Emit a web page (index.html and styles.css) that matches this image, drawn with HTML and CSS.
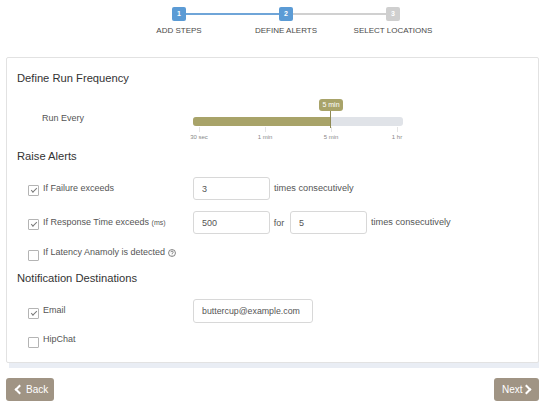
FILE: index.html
```html
<!DOCTYPE html>
<html lang="en">
<head>
    <meta charset="UTF-8">
    <meta name="viewport" content="width=device-width, initial-scale=1.0">
    <title>Define Alerts</title>
    <link rel="stylesheet" href="styles.css">
</head>
<body>
<!-- Wizard steps -->
<div class="steps">
    <div class="step done">
        <span class="step-num">1</span>
        <span class="step-label">ADD STEPS</span>
    </div>
    <div class="step active">
        <span class="step-num">2</span>
        <span class="step-label">DEFINE ALERTS</span>
    </div>
    <div class="step">
        <span class="step-num">3</span>
        <span class="step-label">SELECT LOCATIONS</span>
    </div>
</div>

<div class="card">
    <h2 class="first">Define Run Frequency</h2>
    <div class="freq">
        <span class="freq-label">Run Every</span>
        <div class="slider">
            <div class="track">
                <div class="fill"></div>
                <div class="handle"></div>
                <div class="bubble">5 min</div>
            </div>
            <div class="ticks">
                <span class="tick">30 sec</span>
                <span class="tick">1 min</span>
                <span class="tick">5 min</span>
                <span class="tick">1 hr</span>
            </div>
        </div>
    </div>

    <h2 class="raise">Raise Alerts</h2>
    <div class="row row-failure">
        <label class="check"><input type="checkbox" checked><span>If Failure exceeds</span></label>
        <input class="field" type="text" value="3">
        <span class="after">times consecutively</span>
    </div>
    <div class="row row-response">
        <label class="check"><input type="checkbox" checked><span>If Response Time exceeds <small>(ms)</small></span></label>
        <input class="field" type="text" value="500">
        <span class="for">for</span>
        <input class="field" type="text" value="5">
        <span class="after">times consecutively</span>
    </div>
    <div class="row row-latency">
        <label class="check"><input type="checkbox"><span>If Latency Anamoly is detected</span>
            <svg class="help" width="8" height="8" viewBox="0 0 9 9">
                <circle cx="4.5" cy="4.5" r="3.9" fill="none" stroke="#555" stroke-width="0.8"/>
                <path d="M3.2 3.6c0-1.7 2.7-1.7 2.7 0 0 1-1.4 1-1.4 2" fill="none" stroke="#555" stroke-width="0.8"/>
                <circle cx="4.5" cy="6.8" r="0.5" fill="#555"/>
            </svg>
        </label>
    </div>

    <h2 class="notify">Notification Destinations</h2>
    <div class="row row-email">
        <label class="check"><input type="checkbox" checked><span>Email</span></label>
        <input class="field field-email" type="text" value="buttercup@example.com">
    </div>
    <div class="row row-hipchat">
        <label class="check"><input type="checkbox"><span>HipChat</span></label>
    </div>
</div>

<div class="nav">
    <button type="button" class="btn back"><span class="chev chev-left"></span>Back</button>
    <button type="button" class="btn next">Next<span class="chev chev-right"></span></button>
</div>
</body>
</html>
```

FILE: styles.css
```css
/* page */
html, body {
    height: 100%;
}

body {
    font-family: "Liberation Sans", Arial, sans-serif;
    font-size: 9px;
    color: #555;
    background-color: #fff;
    margin: 0;
    padding: 7px 6px 0;
    box-sizing: border-box;
    overflow: hidden;
}

/* steps */
.steps {
    display: flex;
    justify-content: center;
    margin-left: 27px;
    height: 50px;
}

.step {
    position: relative;
    width: 107px;
    display: flex;
    flex-direction: column;
    align-items: center;
}

.step-num {
    position: relative;
    z-index: 1;
    width: 14px;
    height: 14px;
    line-height: 14px;
    text-align: center;
    font-size: 7px;
    font-weight: bold;
    color: #fff;
    background-color: #cfcfcf;
    border-radius: 2px;
}

.step.done .step-num,
.step.active .step-num {
    background-color: #5b9bd5;
}

/* connector goes under the numbers */
.step::after {
    content: "";
    position: absolute;
    top: 6px;
    left: 50%;
    width: 107px;
    height: 2px;
    background-color: #d0d0d0;
}

.step.done::after {
    background-color: #6fa5d8;
}

.step:last-child::after {
    display: none;
}

.step-label {
    margin-top: 4px;
    font-size: 8px;
    line-height: 11px;
    white-space: nowrap;
    color: #4a4a4a;
}

/* card */
.card {
    height: 306px;
    box-sizing: border-box;
    background-color: #fff;
    border: 1px solid #e2e2e2;
    border-radius: 2px;
    padding: 0 10px;
    box-shadow: 1.5px 6.5px 0 -1.5px #e9edf4;
}

h2 {
    margin: 0;
    font-size: 11.2px;
    font-weight: normal;
    line-height: 14px;
    color: #333;
}

h2.first {
    margin-top: 13px;
}

h2.raise {
    margin-top: 12px;
}

h2.notify {
    margin-top: 10px;
}

/* frequency slider */
.freq {
    display: flex;
    margin-top: 23px;
    height: 29px;
}

.freq-label {
    width: 176px;
    padding-left: 25px;
    box-sizing: border-box;
    line-height: 10px;
    margin-top: 5px;
    font-size: 9px;
}

.slider {
    width: 210px;
    padding-top: 9px;
}

.track {
    position: relative;
    height: 9px;
    background-color: #e0e3e8;
    border-radius: 3px;
}

.fill {
    width: 138px;
    height: 100%;
    background-color: #a8a369;
    border-radius: 3px 0 0 3px;
}

.handle {
    position: absolute;
    left: 137px;
    top: -6px;
    width: 1px;
    height: 17px;
    background-color: #8f8a55;
}

.bubble {
    position: absolute;
    left: 126px;
    top: -18px;
    width: 24px;
    height: 12px;
    line-height: 11px;
    text-align: center;
    font-size: 7px;
    color: #fff;
    background-color: #a8a369;
    border-radius: 3px;
}

.ticks {
    display: flex;
    justify-content: space-between;
    margin: 1px -6px 0 -6px;
}

.tick {
    width: 24px;
    text-align: center;
    font-size: 6px;
    line-height: 7px;
    color: #888;
    padding-top: 7px;
    position: relative;
    white-space: nowrap;
}

.tick::before {
    content: "";
    position: absolute;
    top: 0;
    left: 12px;
    width: 1px;
    height: 5px;
    background-color: #e4e4e4;
}

/* form rows */
.row {
    display: flex;
    align-items: center;
    height: 23px;
}

.row-failure {
    margin-top: 14px;
}

.row-response {
    margin-top: 11px;
}

.row-latency {
    margin-top: 11px;
    height: 16px;
}

.row-email {
    margin-top: 14px;
    height: 24px;
}

.row-hipchat {
    margin-top: 9px;
    height: 16px;
}

.check {
    width: 176px;
    flex: none;
    box-sizing: border-box;
    padding-left: 11px;
    display: flex;
    align-items: center;
    white-space: nowrap;
    font-size: 9px;
}

.check span {
    position: relative;
    top: -1px;
}

.check input {
    appearance: none;
    width: 9px;
    height: 9px;
    margin: 4px 4px 0 0;
    border: 1px solid #b4b4b4;
    border-radius: 1px;
    background-color: #fff;
    position: relative;
    flex: none;
    box-sizing: content-box;
}

.check input:checked::after {
    content: "";
    position: absolute;
    left: 2px;
    top: 2px;
    width: 5px;
    height: 2px;
    border-left: 1px solid #777;
    border-bottom: 1px solid #777;
    transform: rotate(-45deg);
}

.check small {
    font-size: 7px;
}

.help {
    margin-left: 3px;
}

.field {
    width: 77px;
    height: 23px;
    box-sizing: border-box;
    padding: 0 8px;
    font-family: inherit;
    font-size: 9px;
    color: #555;
    border: 1px solid #d8d8d8;
    border-radius: 3px;
    flex: none;
}

.field-email {
    width: 120px;
    height: 24px;
    font-size: 8.8px;
}

.for {
    width: 20px;
    padding-right: 2px;
    box-sizing: border-box;
    text-align: center;
    flex: none;
}

.after {
    margin-left: 4px;
    font-size: 9.2px;
    position: relative;
    top: -1px;
}

/* back and next */
.nav {
    display: flex;
    justify-content: space-between;
    margin-top: 15px;
}

.btn {
    height: 23px;
    padding: 0;
    font-family: inherit;
    font-size: 10px;
    color: #fff;
    background-color: #a09484;
    border: none;
    border-radius: 3px;
    display: flex;
    align-items: center;
}

.back {
    width: 48px;
    padding-left: 10px;
}

.next {
    width: 45px;
    padding-left: 8px;
}

.chev {
    width: 5px;
    height: 5px;
    border-left: 2px solid #fff;
    border-bottom: 2px solid #fff;
}

.chev-left {
    transform: rotate(45deg);
    margin-right: 3px;
}

.chev-right {
    transform: rotate(225deg);
}
```
